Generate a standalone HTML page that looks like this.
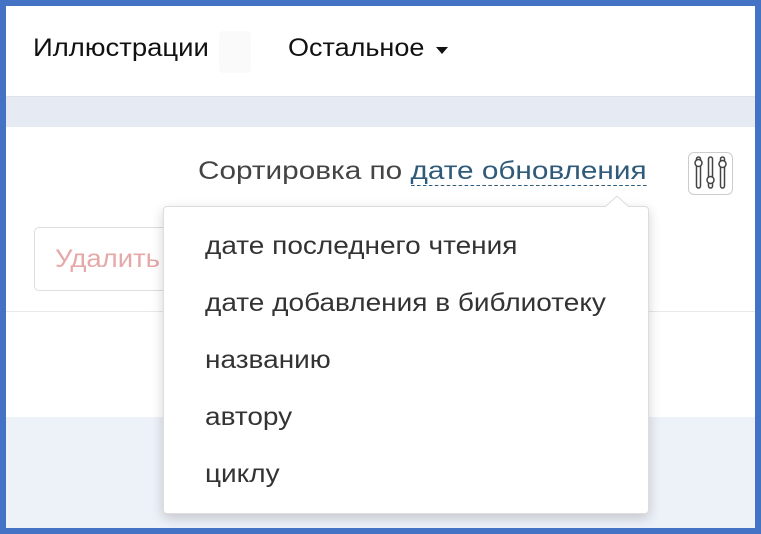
<!DOCTYPE html>
<html><head><meta charset="utf-8"><style>
*{margin:0;padding:0;box-sizing:border-box}
body{width:761px;height:534px;overflow:hidden;background:#4472c4;font-family:"Liberation Sans","DejaVu Sans",sans-serif;position:relative}
.in{position:absolute;left:6px;top:6px;width:749px;height:522px;background:#edf1f8;overflow:hidden}
.hdr{position:absolute;left:0;top:0;width:749px;height:91px;background:#fff;border-bottom:1px solid #e0e3e8}
.band{position:absolute;left:0;top:91px;width:749px;height:30px;background:#e6eaf2}
.panel{position:absolute;left:0;top:121px;width:749px;height:290px;background:#fff}
.t{position:absolute;white-space:nowrap;transform-origin:left top}
.dd{position:absolute;left:157px;top:200px;width:486px;height:308px;background:#fff;border:1px solid #ddd;border-radius:4px;box-shadow:0 4px 12px rgba(0,0,0,.18)}
.dd div{position:absolute;left:41px;font-size:25px;color:#333;white-space:nowrap;transform:scaleX(1.12);transform-origin:left top}
</style></head><body><div class="in">
<div class="hdr">
<div class="t" style="left:27px;top:28px;font-size:25px;color:#111;transform:scaleX(1.1)">Иллюстрации</div>
<div style="position:absolute;left:213px;top:25px;width:32px;height:42px;background:#fafafa;border-radius:4px"></div>
<div class="t" style="left:282px;top:28px;font-size:25px;color:#111;transform:scaleX(1.08)">Остальное</div>
<div style="position:absolute;left:430px;top:41px;width:0;height:0;border-left:6px solid transparent;border-right:6px solid transparent;border-top:7px solid #111"></div>
</div>
<div class="band"></div>
<div class="panel">
<div class="t" style="left:192px;top:30px;font-size:25px;color:#444;transform:scaleX(1.19)">Сортировка по <span style="color:#2f5a7a;border-bottom:1px dashed #2f5a7a">дате обновления</span></div>
<div style="position:absolute;left:682px;top:25px;width:45px;height:43px;border:1px solid #ccc;border-radius:6px">
<svg width="45" height="43" viewBox="0 0 45 43" style="position:absolute;left:-1px;top:-1px" fill="none" stroke="#444" stroke-width="1.5">
<rect x="8.5" y="5" width="4" height="31" rx="2"/><rect x="20.5" y="5" width="4" height="31" rx="2"/><rect x="32.5" y="5" width="4" height="31" rx="2"/>
<circle cx="10.5" cy="11" r="3.5" fill="#fff"/><circle cx="22.5" cy="28" r="3.5" fill="#fff"/><circle cx="34.5" cy="12" r="3.5" fill="#fff"/></svg></div>
<div style="position:absolute;left:28px;top:100px;width:140px;height:64px;border:1px solid #ddd;border-radius:5px"></div>
<div class="t" style="left:49px;top:118px;font-size:25px;color:#e6a8a8;transform:scaleX(1.1)">Удалить</div>
<div style="position:absolute;left:0;top:184px;width:749px;height:1px;background:#e6e8ec"></div>
</div>
<div class="dd">
<div style="top:25px">дате последнего чтения</div>
<div style="top:82px">дате добавления в библиотеку</div>
<div style="top:139px">названию</div>
<div style="top:196px">автору</div>
<div style="top:253px">циклу</div>
</div>
<svg style="position:absolute;left:598px;top:189px" width="26" height="13"><path d="M1 12 L13 1 L25 12" fill="#fff" stroke="#ddd"/></svg>
</div></body></html>
